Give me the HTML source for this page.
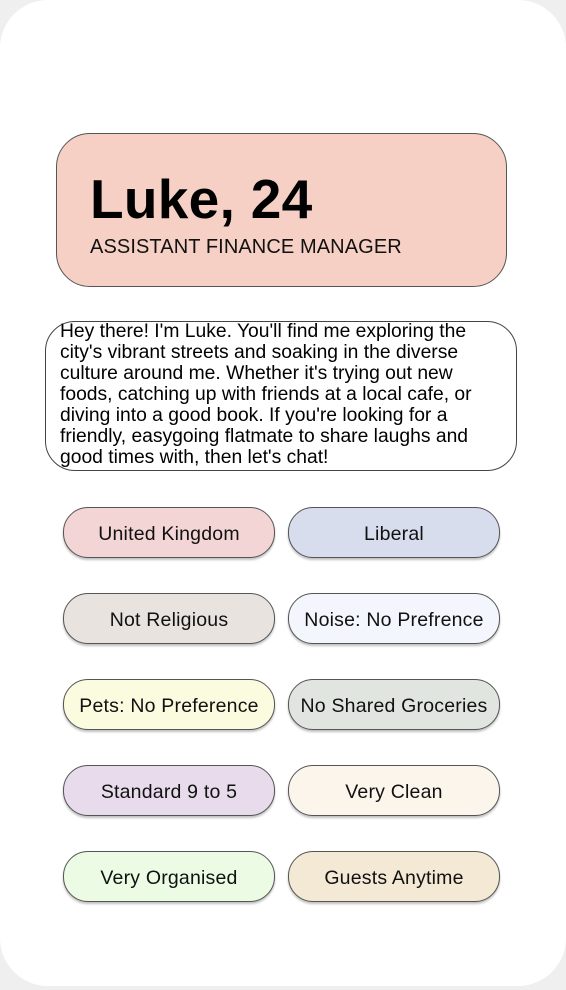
<!DOCTYPE html>
<html><head><meta charset="utf-8"><style>
html,body{margin:0;padding:0;background:#efefef;width:566px;height:990px;overflow:hidden}
.card{position:absolute;left:0;top:0;width:566px;height:986px;background:#fff;border-radius:48px}
.head{position:absolute;left:56px;top:133px;width:449px;height:152px;background:#f6d0c4;border:1px solid #555;border-radius:34px}
.name{position:absolute;left:33px;top:33px;font:bold 55px "Liberation Sans",sans-serif;color:#000;letter-spacing:0.3px}
.job{position:absolute;left:33px;top:102px;font:20px "Liberation Sans",sans-serif;color:#111;letter-spacing:0.1px}
.bio{position:absolute;left:45px;top:321px;width:472px;height:150px;border:1px solid #444;border-radius:30px;box-sizing:border-box}
.bio p{position:absolute;left:14px;top:-1px;margin:0;width:450px;font:19.3px/21px "Liberation Sans",sans-serif;color:#000}
.pill{position:absolute;width:212px;border:1px solid #555;border-radius:25px;box-shadow:0 2px 2px rgba(0,0,0,.25);font:19.5px "Liberation Sans",sans-serif;color:#111;display:flex;align-items:center;justify-content:center;white-space:nowrap;letter-spacing:0.2px;box-sizing:border-box;padding-top:3px;height:51px}
</style></head><body>
<div class="card">
<div class="head"><div class="name">Luke, 24</div><div class="job">ASSISTANT FINANCE MANAGER</div></div>
<div class="bio"><p>Hey there! I'm Luke. You'll find me exploring the city's vibrant streets and soaking in the diverse culture around me. Whether it's trying out new foods, catching up with friends at a local cafe, or diving into a good book. If you're looking for a friendly, easygoing flatmate to share laughs and good times with, then let's chat!</p></div>
<div class="pill" style="left:63px;top:507px;background:#f4d5d5">United Kingdom</div>
<div class="pill" style="left:288px;top:507px;background:#d8ddee">Liberal</div>
<div class="pill" style="left:63px;top:593px;background:#e8e3df">Not Religious</div>
<div class="pill" style="left:288px;top:593px;background:#f3f6fc">Noise: No Prefrence</div>
<div class="pill" style="left:63px;top:679px;background:#fafbdf">Pets: No Preference</div>
<div class="pill" style="left:288px;top:679px;background:#e0e5df">No Shared Groceries</div>
<div class="pill" style="left:63px;top:765px;background:#e8dcec">Standard 9 to 5</div>
<div class="pill" style="left:288px;top:765px;background:#fcf5ec">Very Clean</div>
<div class="pill" style="left:63px;top:851px;background:#ebfbe4">Very Organised</div>
<div class="pill" style="left:288px;top:851px;background:#f3e9d5">Guests Anytime</div>
</div>
</body></html>
